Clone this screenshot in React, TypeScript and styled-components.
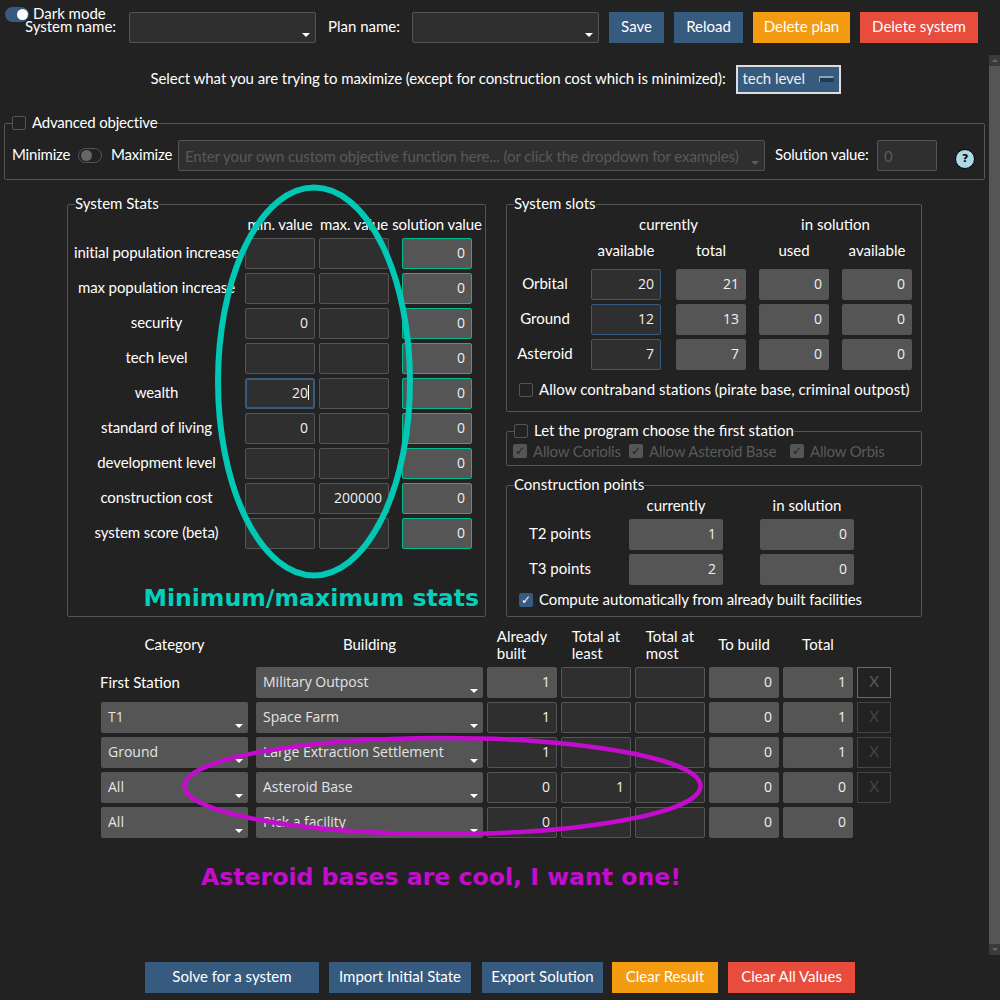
import React from "react";
import styled, { createGlobalStyle } from "styled-components";

const GlobalStyle = createGlobalStyle`
  html, body {
    margin: 0;
    padding: 0;
    background: #222222;
  }
  body {
    color: #ffffff;
    font-family: "Lato", "Liberation Sans", sans-serif;
    font-size: 15px;
    line-height: 17px;
  }
`;

const entryFont = '14px "Open Sans", "DejaVu Sans", sans-serif';

const Page = styled.div`
  position: relative;
  width: 1000px;
  height: 1000px;
  display: flex;
  overflow: hidden;
`;

const Main = styled.main`
  width: 989px;
  padding-top: 7px;
  box-sizing: border-box;
`;

const Scrollbar = styled.div`
  width: 11px;
  height: 900px;
  margin-top: 55px;
  display: flex;
  flex-direction: column;
  background: #3a3a3a;
`;

const ScrollArrow = styled.div<{ $up?: boolean }>`
  height: 11px;
  display: flex;
  align-items: center;
  justify-content: center;
  &::before {
    content: "";
    border-left: 3px solid transparent;
    border-right: 3px solid transparent;
    border-bottom: ${(p) => (p.$up ? "3px solid #666" : "0")};
    border-top: ${(p) => (p.$up ? "0" : "3px solid #666")};
  }
`;

const ScrollThumb = styled.div`
  flex: 1;
  background: #555555;
`;

const ModeRow = styled.div`
  height: 5px;
  padding-left: 5px;
  display: flex;
  align-items: flex-start;
  gap: 4px;
  position: relative;
  z-index: 1;
`;

const Toggle = styled.span<{ $on?: boolean; $gapLeft?: number }>`
  position: relative;
  flex: none;
  display: block;
  width: 24px;
  height: 15px;
  box-sizing: border-box;
  margin-left: ${(p) => p.$gapLeft ?? 0}px;
  border-radius: 8px;
  background: ${(p) => (p.$on ? "#375a7f" : "transparent")};
  border: ${(p) => (p.$on ? "0" : "1px solid #555555")};
  &::after {
    content: "";
    position: absolute;
    top: ${(p) => (p.$on ? "2px" : "1px")};
    left: ${(p) => (p.$on ? "12px" : "2px")};
    width: 11px;
    height: 11px;
    border-radius: 50%;
    background: ${(p) => (p.$on ? "#ffffff" : "#666666")};
  }
`;

const Text = styled.span<{ $width?: number; $gapLeft?: number }>`
  flex: none;
  display: block;
  box-sizing: content-box;
  padding-bottom: 2px;
  margin-left: ${(p) => p.$gapLeft ?? 0}px;
  white-space: nowrap;
  text-align: center;
  ${(p) => (p.$width ? `width: ${p.$width}px;` : "")}
`;

const ModeLabel = styled(Text)`
  line-height: 12px;
  padding-bottom: 0;
`;

const TopBar = styled.div`
  height: 31px;
  padding-left: 24px;
  display: flex;
  align-items: center;
`;

const Select = styled.div<{ $width: number; $tone?: "dark" | "gray"; $disabled?: boolean; $gapLeft?: number }>`
  position: relative;
  flex: none;
  width: ${(p) => p.$width}px;
  height: 31px;
  box-sizing: border-box;
  margin-left: ${(p) => p.$gapLeft ?? 0}px;
  padding: 0 0 ${(p) => (p.$tone === "gray" ? "2px" : "0")} 7px;
  border-radius: 2px;
  display: flex;
  align-items: center;
  font: ${(p) => (p.$tone === "gray" ? entryFont : "inherit")};
  color: ${(p) => (p.$disabled ? "#5a5a5a" : "#e4e4e4")};
  background: ${(p) => (p.$tone === "gray" ? "#555555" : "#2f2f2f")};
  border: ${(p) => (p.$tone === "gray" ? "0" : "1px solid #555555")};
  &::after {
    content: "";
    position: absolute;
    right: 5px;
    bottom: 5px;
    border-left: 4px solid transparent;
    border-right: 4px solid transparent;
    border-top: 4px solid ${(p) => (p.$disabled ? "#5a5a5a" : "#ffffff")};
  }
`;

const Button = styled.button<{ $width: number; $kind: "primary" | "warning" | "danger"; $gapLeft?: number }>`
  flex: none;
  width: ${(p) => p.$width}px;
  height: 31px;
  margin-left: ${(p) => p.$gapLeft ?? 0}px;
  padding: 0 0 2px;
  border: 0;
  color: #ffffff;
  font: inherit;
  background: ${(p) =>
    p.$kind === "primary" ? "#375a7f" : p.$kind === "warning" ? "#f39c12" : "#e74c3c"};
`;

const ObjectiveRow = styled.div`
  margin-top: 22px;
  padding-left: 2px;
  display: flex;
  justify-content: center;
  align-items: center;
  gap: 10px;
  letter-spacing: -0.055px;
`;

const MenuButton = styled.div`
  position: relative;
  width: 105px;
  height: 29px;
  box-sizing: border-box;
  padding: 0 0 2px 5px;
  display: flex;
  align-items: center;
  background: #375a7f;
  border: 2px solid #dddddd;
  color: #eeeeee;
  &::after {
    content: "";
    position: absolute;
    right: 5px;
    top: 9px;
    width: 15px;
    height: 6px;
    box-sizing: border-box;
    background: #223a55;
    border-top: 2px solid #8ea3b8;
    border-left: 1px solid #8ea3b8;
    border-right: 1px solid #2a4460;
  }
`;

const Fieldset = styled.fieldset`
  position: relative;
  min-width: 0;
  margin: 0;
  padding: 0;
  border: 1px solid #555555;
  border-radius: 2px;
`;

const Legend = styled.legend`
  display: flex;
  align-items: center;
  gap: 6px;
  height: 18px;
  margin-left: 7px;
  padding: 0;
`;

const AdvancedFieldset = styled(Fieldset)`
  margin: 20px 4px 0;
  letter-spacing: -0.2px;
`;

const AdvancedBody = styled.div`
  padding: 8px 7px 8px;
  display: flex;
  align-items: center;
`;

const WideInput = styled.input<{ $width: number; $gapLeft?: number }>`
  flex: none;
  width: ${(p) => p.$width}px;
  height: 31px;
  box-sizing: border-box;
  margin: 0 0 0 ${(p) => p.$gapLeft ?? 0}px;
  padding: 0 6px;
  background: #2f2f2f;
  border: 1px solid #555555;
  border-radius: 2px;
  color: #5a5a5a;
  font: inherit;
  letter-spacing: -0.09px;
  outline: none;
  &::placeholder {
    color: #5a5a5a;
    opacity: 1;
  }
`;

const ComboInput = styled(WideInput)`
  height: 29px;
  border: 0;
`;

const ComboWrap = styled(Select)`
  padding: 0;
`;

const Help = styled.span`
  flex: none;
  width: 20px;
  height: 20px;
  box-sizing: border-box;
  margin: 9px 0 0 18px;
  align-self: flex-start;
  border-radius: 50%;
  background: #add8e6;
  border: 1px solid #000000;
  color: #000000;
  font: bold 11px/18px "DejaVu Sans", sans-serif;
  text-align: center;
`;

const Columns = styled.div`
  position: relative;
  margin: 15px 0 0 67px;
  display: grid;
  grid-template-columns: 419px 416px;
  column-gap: 20px;
`;

const RightColumn = styled.div`
  display: flex;
  flex-direction: column;
  gap: 10px;
`;

const StatsGrid = styled.div`
  padding-top: 4px;
  display: grid;
  grid-template-columns: 173px 70px 70px 79px;
  column-gap: 4px;
  row-gap: 4px;
  align-items: center;
  letter-spacing: -0.1px;
`;

const HeadCell = styled.div<{ $width?: number; $end?: boolean; $gapBottom?: number }>`
  width: ${(p) => p.$width ?? 70}px;
  height: 17px;
  line-height: 15px;
  margin-bottom: ${(p) => p.$gapBottom ?? 0}px;
  display: flex;
  justify-content: center;
  white-space: nowrap;
  ${(p) => (p.$end ? "justify-self: end;" : "")}
`;

const RowLabel = styled.div<{ $gapRight?: number; $gapLeft?: number }>`
  text-align: center;
  white-space: nowrap;
  padding: 0 ${(p) => p.$gapRight ?? 0}px 2px ${(p) => p.$gapLeft ?? 0}px;
`;

const Spacer = styled.div``;

const Field = styled.input<{ $kind?: "plain" | "solution" | "readonly" | "accent" | "focus"; $width?: number; $end?: boolean }>`
  width: ${(p) => p.$width ?? 70}px;
  height: 31px;
  box-sizing: border-box;
  margin: 0;
  padding: 0 6px 2px;
  text-align: right;
  color: #f0f0f0;
  font: ${entryFont};
  outline: none;
  border-radius: 2px;
  ${(p) => (p.$end ? "justify-self: end;" : "")}
  background: ${(p) => (p.$kind === "solution" || p.$kind === "readonly" ? "#555555" : "#2f2f2f")};
  border: 1px solid
    ${(p) =>
      p.$kind === "solution"
        ? "#00bc8c"
        : p.$kind === "readonly"
        ? "#555555"
        : p.$kind === "accent" || p.$kind === "focus"
        ? "#375a7f"
        : "#555555"};
  ${(p) => (p.$kind === "focus" ? "box-shadow: inset 0 0 0 1px #375a7f;" : "")}
`;

const FieldWrap = styled.div`
  position: relative;
  width: 70px;
  height: 31px;
  &::after {
    content: "";
    position: absolute;
    right: 6px;
    top: 7px;
    width: 1px;
    height: 15px;
    background: #ffffff;
  }
`;

const Annotation = styled.div<{ $color: string }>`
  position: absolute;
  color: ${(p) => p.$color};
  font: bold 23.6px/28px "DejaVu Sans", sans-serif;
  white-space: nowrap;
`;

const StatsNote = styled(Annotation)`
  right: 6px;
  bottom: 4px;
`;

const SlotsGrid = styled.div`
  padding-top: 4px;
  display: grid;
  grid-template-columns: 84px 85px 83px 83px 70px;
  row-gap: 4px;
  align-items: center;
`;

const SpanHead = styled(HeadCell)`
  grid-column: span 2;
`;

const CheckRow = styled.div<{ $top: number; $bottom: number; $spacing?: number }>`
  height: 18px;
  margin: ${(p) => p.$top}px 0 ${(p) => p.$bottom}px 12px;
  display: flex;
  align-items: center;
  gap: 6px;
  white-space: nowrap;
  letter-spacing: ${(p) => p.$spacing ?? 0}px;
`;

const Check = styled.span<{ $state?: "off" | "on" | "disabled" }>`
  flex: none;
  width: 14px;
  height: 14px;
  box-sizing: border-box;
  border-radius: 2px;
  display: flex;
  align-items: center;
  justify-content: center;
  font: 12px/14px "DejaVu Sans", sans-serif;
  color: ${(p) => (p.$state === "on" ? "#ffffff" : "#222222")};
  background: ${(p) =>
    p.$state === "on" ? "#375a7f" : p.$state === "disabled" ? "#555555" : "transparent"};
  border: ${(p) => (p.$state === "on" || p.$state === "disabled" ? "0" : "1px solid #555555")};
`;

const DisabledText = styled.span<{ $width: number }>`
  flex: none;
  width: ${(p) => p.$width}px;
  color: #5a5a5a;
  white-space: nowrap;
  letter-spacing: -0.2px;
`;

const StationRow = styled.div`
  height: 18px;
  margin: 2px 0 5px 6px;
  display: flex;
  align-items: center;
  gap: 6px;
`;

const PointsGrid = styled.div`
  padding-top: 4px;
  display: grid;
  grid-template-columns: 122px 131px 94px;
  row-gap: 4px;
  align-items: center;
`;

const BuildTable = styled.div`
  position: relative;
  margin: 13px 0 0 101px;
  height: 208px;
  display: grid;
  grid-template-columns: 151px 227px repeat(5, 70px) 34px;
  grid-auto-rows: 31px;
  grid-template-rows: 33px;
  column-gap: 4px;
  row-gap: 4px;
  align-items: center;
`;

const TableHead = styled.div`
  display: flex;
  justify-content: center;
  align-items: center;
  padding-bottom: 4px;
  white-space: nowrap;
  line-height: 17px;
`;

const CategoryHead = styled(TableHead)`
  width: 147px;
`;

const FirstStation = styled.div`
  white-space: nowrap;
  margin-left: -1px;
`;

const RemoveButton = styled.button<{ $active?: boolean }>`
  width: 34px;
  height: 31px;
  box-sizing: border-box;
  padding: 0 0 2px;
  background: transparent;
  border: 1px solid ${(p) => (p.$active ? "#6a6a6a" : "#444444")};
  color: ${(p) => (p.$active ? "#5a5a5a" : "#444444")};
  font: inherit;
`;

const AsteroidNote = styled(Annotation)`
  left: 100px;
  top: 233px;
`;

const BottomBar = styled.div`
  margin-top: 124px;
  padding-left: 145px;
  display: flex;
`;

const OverlayArt = styled.svg`
  position: absolute;
  left: 0;
  top: 0;
  width: 1000px;
  height: 1000px;
  pointer-events: none;
`;

const stats = [
  ["initial population increase", "", ""],
  ["max population increase", "", ""],
  ["security", "0", ""],
  ["tech level", "", ""],
  ["wealth", "20", ""],
  ["standard of living", "0", ""],
  ["development level", "", ""],
  ["construction cost", "", "200000"],
  ["system score (beta)", "", ""],
];

const slots = [
  ["Orbital", "20", "21"],
  ["Ground", "12", "13"],
  ["Asteroid", "7", "7"],
];

const buildings = [
  { category: "First Station", building: "Military Outpost", built: "1", least: "", toBuild: "0", total: "1" },
  { category: "T1", building: "Space Farm", built: "1", least: "", toBuild: "0", total: "1" },
  { category: "Ground", building: "Large Extraction Settlement", built: "1", least: "", toBuild: "0", total: "1" },
  { category: "All", building: "Asteroid Base", built: "0", least: "1", toBuild: "0", total: "0" },
  { category: "All", building: "Pick a facility", built: "0", least: "", toBuild: "0", total: "0" },
];

export default function App() {
  return (
    <Page>
      <GlobalStyle />
      <Main>
        <ModeRow>
          <Toggle $on />
          <ModeLabel>Dark mode</ModeLabel>
        </ModeRow>

        <TopBar>
          <Text $width={93}>System name:</Text>
          <Select $width={187} $gapLeft={12} />
          <Text $width={72} $gapLeft={12}>Plan name:</Text>
          <Select $width={187} $gapLeft={12} />
          <Button $kind="primary" $width={55} $gapLeft={10}>Save</Button>
          <Button $kind="primary" $width={69} $gapLeft={10}>Reload</Button>
          <Button $kind="warning" $width={97} $gapLeft={10}>Delete plan</Button>
          <Button $kind="danger" $width={118} $gapLeft={10}>Delete system</Button>
        </TopBar>

        <ObjectiveRow>
          <Text>Select what you are trying to maximize (except for construction cost which is minimized):</Text>
          <MenuButton>tech level</MenuButton>
        </ObjectiveRow>

        <AdvancedFieldset>
          <Legend>
            <Check />
            <Text>Advanced objective</Text>
          </Legend>
          <AdvancedBody>
            <Text $width={58}>Minimize</Text>
            <Toggle $gapLeft={8} />
            <Text $width={61} $gapLeft={9}>Maximize</Text>
            <ComboWrap $width={587} $gapLeft={6} $disabled>
              <ComboInput
                disabled
                $width={585}
                placeholder="Enter your own custom objective function here... (or click the dropdown for examples)"
              />
            </ComboWrap>
            <Text $width={92} $gapLeft={10}>Solution value:</Text>
            <WideInput disabled $width={60} $gapLeft={10} placeholder="0" />
            <Help>?</Help>
          </AdvancedBody>
        </AdvancedFieldset>

        <Columns>
          <Fieldset>
            <Legend><Text>System Stats</Text></Legend>
            <StatsGrid>
              <Spacer />
              <HeadCell>min. value</HeadCell>
              <HeadCell>max. value</HeadCell>
              <HeadCell $end>solution value</HeadCell>
              {stats.map(([name, min, max]) => (
                <React.Fragment key={name}>
                  <RowLabel $gapLeft={4}>{name}</RowLabel>
                  {name === "wealth" ? (
                    <FieldWrap>
                      <Field readOnly value={min} $kind="focus" />
                    </FieldWrap>
                  ) : (
                    <Field readOnly value={min} />
                  )}
                  <Field readOnly value={max} />
                  <Field readOnly value="0" $kind="solution" $end />
                </React.Fragment>
              ))}
            </StatsGrid>
            <StatsNote $color="#00d0bc">Minimum/maximum stats</StatsNote>
          </Fieldset>

          <RightColumn>
            <Fieldset>
              <Legend><Text>System slots</Text></Legend>
              <SlotsGrid>
                <Spacer />
                <SpanHead $width={155} $gapBottom={5}>currently</SpanHead>
                <SpanHead $width={153} $gapBottom={5}>in solution</SpanHead>
                <Spacer />
                <HeadCell $gapBottom={5}>available</HeadCell>
                <HeadCell $gapBottom={5}>total</HeadCell>
                <HeadCell $gapBottom={5}>used</HeadCell>
                <HeadCell $gapBottom={5}>available</HeadCell>
                {slots.map(([name, available, total]) => (
                  <React.Fragment key={name}>
                    <RowLabel $gapRight={8}>{name}</RowLabel>
                    <Field readOnly value={available} $kind="accent" />
                    <Field readOnly value={total} $kind="readonly" />
                    <Field readOnly value="0" $kind="readonly" />
                    <Field readOnly value="0" $kind="readonly" />
                  </React.Fragment>
                ))}
              </SlotsGrid>
              <CheckRow $top={11} $bottom={12} $spacing={0.04}>
                <Check />
                <Text>Allow contraband stations (pirate base, criminal outpost)</Text>
              </CheckRow>
            </Fieldset>

            <Fieldset>
              <Legend>
                <Check />
                <Text>Let the program choose the first station</Text>
              </Legend>
              <StationRow>
                <Check $state="disabled">✓</Check>
                <DisabledText $width={90}>Allow Coriolis</DisabledText>
                <Check $state="disabled">✓</Check>
                <DisabledText $width={135}>Allow Asteroid Base</DisabledText>
                <Check $state="disabled">✓</Check>
                <DisabledText $width={75}>Allow Orbis</DisabledText>
              </StationRow>
            </Fieldset>

            <Fieldset>
              <Legend><Text>Construction points</Text></Legend>
              <PointsGrid>
                <Spacer />
                <HeadCell $width={94}>currently</HeadCell>
                <HeadCell $width={94}>in solution</HeadCell>
                <RowLabel $gapRight={16}>T2 points</RowLabel>
                <Field readOnly value="1" $kind="readonly" $width={94} />
                <Field readOnly value="0" $kind="readonly" $width={94} />
                <RowLabel $gapRight={16}>T3 points</RowLabel>
                <Field readOnly value="2" $kind="readonly" $width={94} />
                <Field readOnly value="0" $kind="readonly" $width={94} />
              </PointsGrid>
              <CheckRow $top={6} $bottom={7} $spacing={-0.12}>
                <Check $state="on">✓</Check>
                <Text>Compute automatically from already built facilities</Text>
              </CheckRow>
            </Fieldset>
          </RightColumn>
        </Columns>

        <BuildTable>
          <CategoryHead>Category</CategoryHead>
          <TableHead>Building</TableHead>
          <TableHead>Already<br />built</TableHead>
          <TableHead>Total at<br />least</TableHead>
          <TableHead>Total at<br />most</TableHead>
          <TableHead>To build</TableHead>
          <TableHead>Total</TableHead>
          <Spacer />
          {buildings.map((row, i) => (
            <React.Fragment key={row.building}>
              {i === 0 ? (
                <FirstStation>{row.category}</FirstStation>
              ) : (
                <Select $width={147} $tone="gray">{row.category}</Select>
              )}
              <Select $width={227} $tone="gray">{row.building}</Select>
              <Field readOnly value={row.built} $kind={i === 0 ? "readonly" : "plain"} />
              <Field readOnly value={row.least} />
              <Field readOnly value="" />
              <Field readOnly value={row.toBuild} $kind="readonly" />
              <Field readOnly value={row.total} $kind="readonly" />
              {i < 4 ? <RemoveButton $active={i === 0}>X</RemoveButton> : <Spacer />}
            </React.Fragment>
          ))}
          <AsteroidNote $color="#c40ccc">Asteroid bases are cool, I want one!</AsteroidNote>
        </BuildTable>

        <BottomBar>
          <Button $kind="primary" $width={174}>Solve for a system</Button>
          <Button $kind="primary" $width={142} $gapLeft={10}>Import Initial State</Button>
          <Button $kind="primary" $width={121} $gapLeft={11}>Export Solution</Button>
          <Button $kind="warning" $width={106} $gapLeft={9}>Clear Result</Button>
          <Button $kind="danger" $width={127} $gapLeft={10}>Clear All Values</Button>
        </BottomBar>
      </Main>

      <Scrollbar>
        <ScrollArrow $up />
        <ScrollThumb />
        <ScrollArrow />
      </Scrollbar>

      <OverlayArt viewBox="0 0 1000 1000">
        <ellipse cx="314" cy="381.5" rx="96" ry="194" fill="none" stroke="#00c8b4" strokeWidth="6" />
        <ellipse cx="442.5" cy="786" rx="258" ry="48" fill="none" stroke="#c40ccc" strokeWidth="4.5" />
      </OverlayArt>
    </Page>
  );
}
